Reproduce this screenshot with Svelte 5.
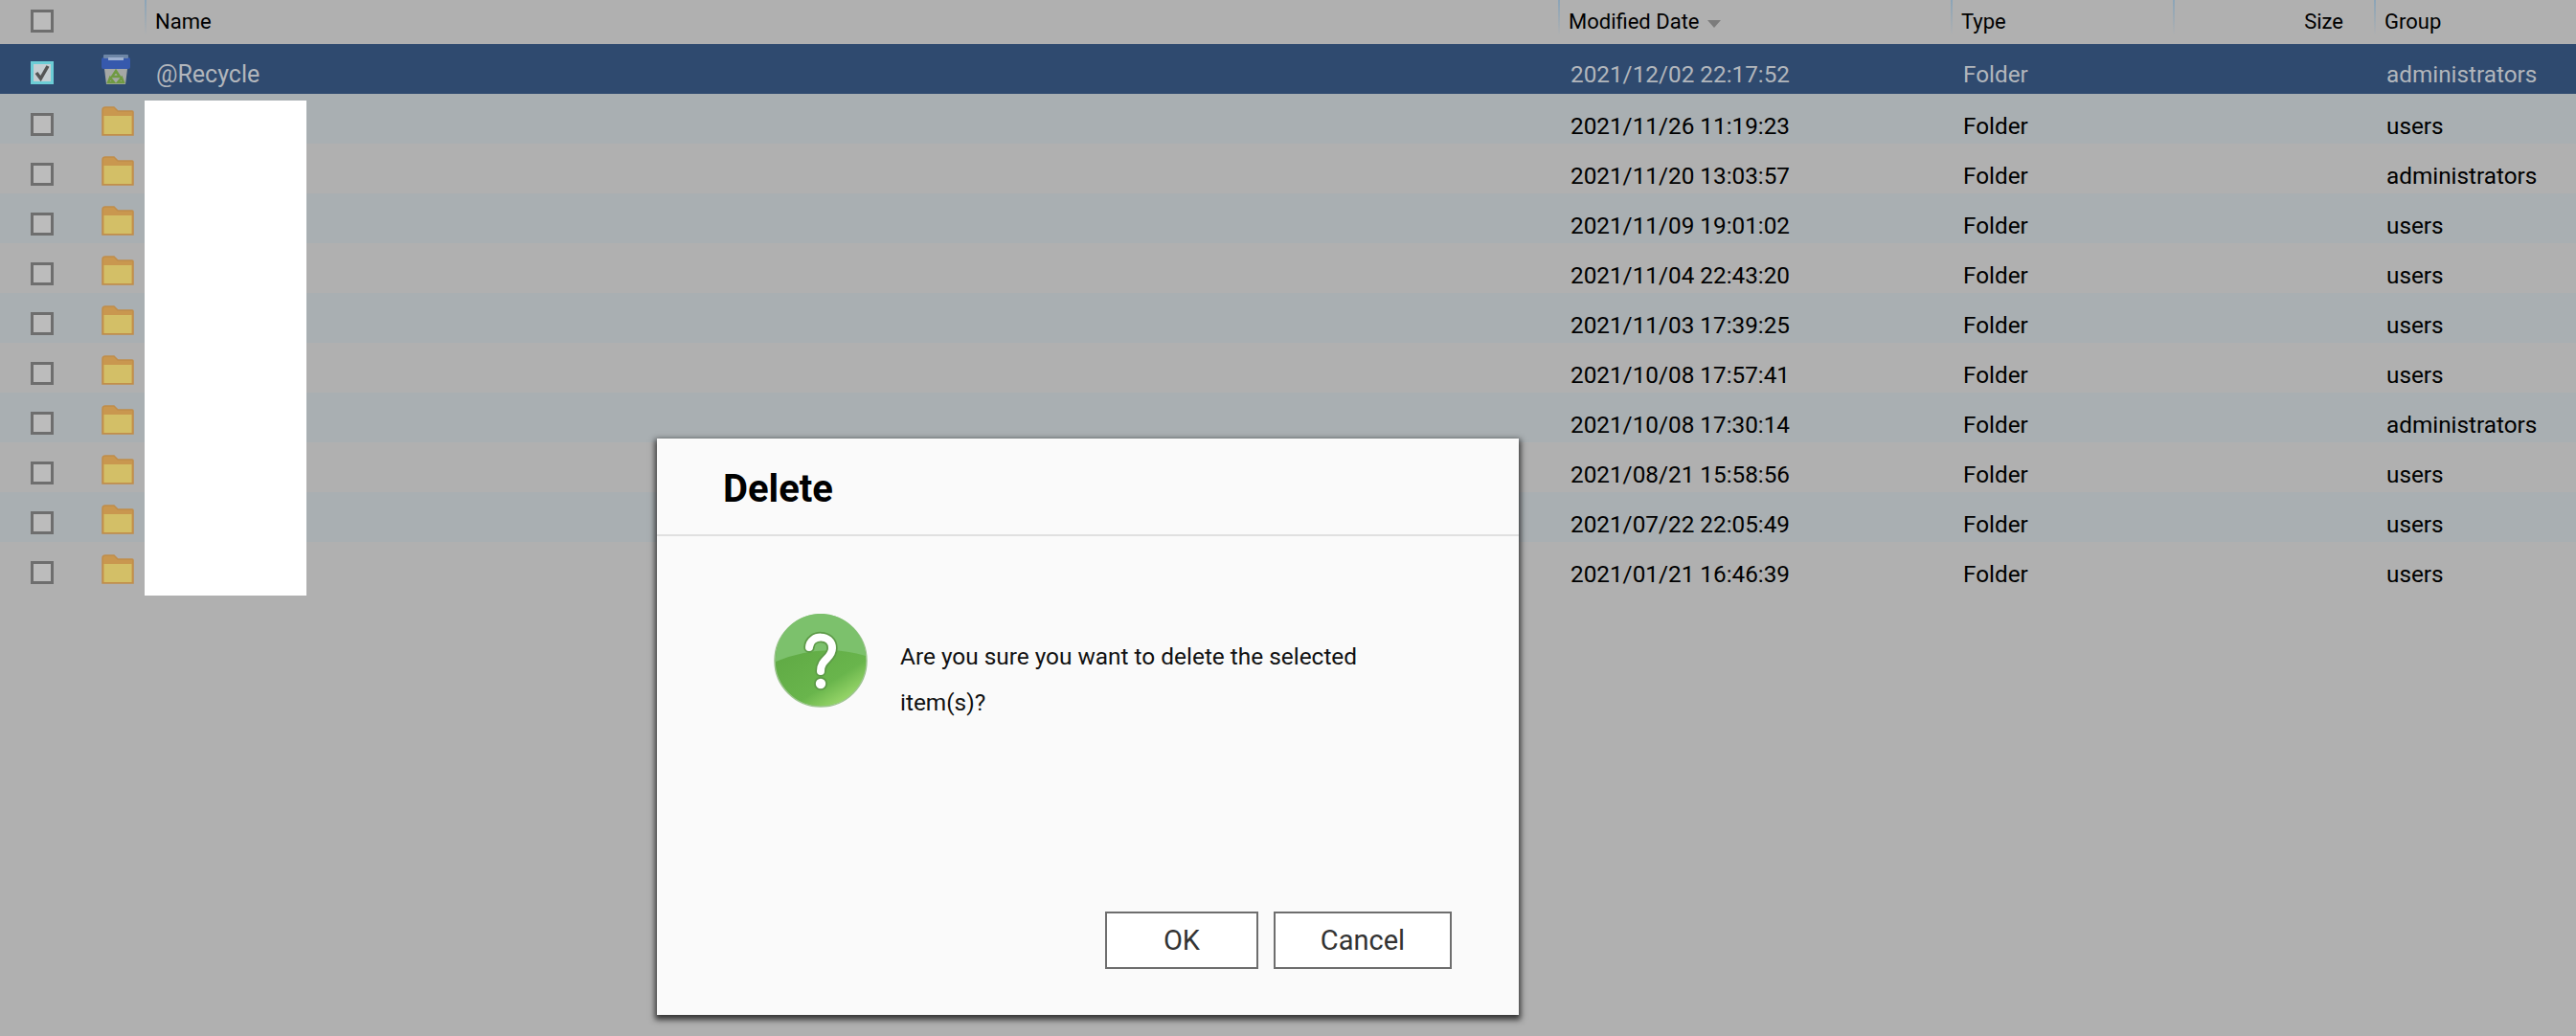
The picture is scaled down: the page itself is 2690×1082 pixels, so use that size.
<script>
    const rows = [
        { date: "2021/12/02 22:17:52", group: "administrators", name: "@Recycle", selected: true },
        { date: "2021/11/26 11:19:23", group: "users" },
        { date: "2021/11/20 13:03:57", group: "administrators" },
        { date: "2021/11/09 19:01:02", group: "users" },
        { date: "2021/11/04 22:43:20", group: "users" },
        { date: "2021/11/03 17:39:25", group: "users" },
        { date: "2021/10/08 17:57:41", group: "users" },
        { date: "2021/10/08 17:30:14", group: "administrators" },
        { date: "2021/08/21 15:58:56", group: "users" },
        { date: "2021/07/22 22:05:49", group: "users" },
        { date: "2021/01/21 16:46:39", group: "users" },
    ];
</script>

<div class="page">
    <div class="row head">
        <div class="check-cell"><span class="box"></span></div>
        <div></div>
        <div class="col">Name</div>
        <div class="col">Modified Date <span class="sort"></span></div>
        <div class="col">Type</div>
        <div class="col size">Size</div>
        <div class="col">Group</div>
    </div>

    {#each rows as row, i}
        <div class="row item" class:selected={row.selected} class:alt={i % 2 === 1}>
            <div class="check-cell">
                <span class="box" class:checked={row.selected}>
                    {#if row.selected}
                        <svg viewBox="0 0 18 18" width="18" height="18">
                            <path d="M3 9 L7.5 15 L15 2" fill="none" stroke="#555" stroke-width="3.5" />
                        </svg>
                    {/if}
                </span>
            </div>
            <div class="icon-cell">
                {#if row.selected}
                    <svg viewBox="0 0 30 32" width="30" height="32">
                        <path d="M3 15 H27 L25 31 H5 Z" fill="#a5a8a6" />
                        <rect x="0" y="3" width="30" height="12" rx="2" fill="#3659ad" />
                        <rect x="2" y="0" width="26" height="4" rx="1" fill="#6d86a6" />
                        <rect x="7" y="3" width="16" height="3" fill="#9db0cf" />
                        <path d="M15 17 L19 23 H11 Z M9 24 L13 29 H7 Z M21 24 L23 29 H17 Z" fill="none" stroke="#6f9a42" stroke-width="2.4" />
                    </svg>
                {:else}
                    <svg viewBox="0 0 34 31" width="34" height="31">
                        <path d="M1 30 V4 Q1 1 4 1 H13 L17 5 H32 Q33 5 33 6 V30 Z" fill="#c9974f" stroke="#c08d4a" stroke-width="1.5" />
                        <rect x="2.5" y="10" width="29" height="19" fill="#d3bf67" />
                    </svg>
                {/if}
            </div>
            <div class="name">{row.name ?? ""}</div>
            <div class="cell">{row.date}</div>
            <div class="cell">Folder</div>
            <div class="cell"></div>
            <div class="cell">{row.group}</div>
        </div>
    {/each}

    <div class="redacted"></div>

    <div class="dialog">
        <div class="dialog-title">Delete</div>
        <div class="dialog-body">
            <svg class="question" viewBox="0 0 98 98" width="98" height="98">
                <defs>
                    <linearGradient id="ball" x1="0.3" y1="0.2" x2="0.8" y2="1">
                        <stop offset="0" stop-color="#5fa944" />
                        <stop offset="0.65" stop-color="#69b54c" />
                        <stop offset="1" stop-color="#a6e072" />
                    </linearGradient>
                </defs>
                <circle cx="49" cy="49" r="48" fill="url(#ball)" stroke="#9cc48e" stroke-width="1.5" />
                <path d="M2 50 A47 47 0 0 1 96 44 Q50 30 2 50 Z" fill="#7cc16c" />
                <g fill="none" stroke="#5d9a48" stroke-width="11.5" stroke-linecap="round">
                    <path d="M37 35 C38 21 61 21 61 36 C61 47 49 47 49 60" />
                </g>
                <circle cx="49" cy="73" r="7" fill="#5d9a48" />
                <g fill="none" stroke="#fff" stroke-width="8" stroke-linecap="round">
                    <path d="M37 35 C38 21 61 21 61 36 C61 47 49 47 49 60" />
                </g>
                <circle cx="49" cy="73" r="5.2" fill="#fff" />
            </svg>
            <p>Are you sure you want to delete the selected item(s)?</p>
        </div>
        <div class="dialog-actions">
            <button class="ok">OK</button>
            <button class="cancel">Cancel</button>
        </div>
    </div>
</div>

<style>
    :global(body) {
        background: #b0b0b0;
    }
    .page {
        position: relative;
        height: 1082px;
        overflow: hidden;
        font-family: Roboto, "Liberation Sans", sans-serif;
        color: #000;
    }
    .row {
        display: grid;
        grid-template-columns: 98px 53px 1476px 410px 232px 210px 1fr;
        box-sizing: border-box;
    }
    .head {
        height: 46px;
        font-size: 22px;
    }
    .head .check-cell {
        padding-top: 10px;
    }
    .col {
        height: 36px;
        line-height: 46px;
        padding-left: 9px;
        border-left: 2px solid;
        border-image: linear-gradient(#8aa4b8, #b0b0b0) 1;
        box-sizing: border-box;
    }
    .size {
        text-align: right;
        padding-right: 32px;
    }
    .sort {
        display: inline-block;
        border: 7px solid transparent;
        border-top: 8px solid #7c7c7c;
        border-bottom: 0;
        margin-left: 3px;
        vertical-align: 1px;
    }
    .item {
        height: 52px;
        padding-top: 12px;
        align-items: center;
        font-size: 24.3px;
        background: #b0b0b0;
    }
    .item.alt {
        background: #a9afb2;
    }
    .item.selected {
        padding-top: 8px;
        background: #2f4a6f;
        color: #b2b6bc;
    }
    .check-cell {
        padding-left: 32px;
        line-height: 0;
    }
    .box {
        display: inline-flex;
        align-items: center;
        justify-content: center;
        width: 24px;
        height: 24px;
        box-sizing: border-box;
        border: 3px solid #6e6e6e;
        background: #bcbcbc;
    }
    .box.checked {
        border-color: #6ccdd6;
        background: #c6ced2;
    }
    .icon-cell {
        padding-left: 8px;
        line-height: 0;
        margin-top: -7px;
    }
    .name {
        padding: 2px 0 0 12px;
        font-size: 25px;
    }
    .cell {
        padding: 2px 0 0 13px;
    }
    .redacted {
        position: absolute;
        left: 151px;
        top: 105px;
        width: 169px;
        height: 517px;
        background: #fff;
    }
    .dialog {
        position: absolute;
        left: 686px;
        top: 458px;
        width: 900px;
        height: 602px;
        box-sizing: border-box;
        display: flex;
        flex-direction: column;
        background: #fafafa;
        box-shadow: 0 3px 6px 2px rgba(0, 0, 0, 0.7);
    }
    .dialog-title {
        height: 102px;
        box-sizing: border-box;
        padding: 30px 0 0 69px;
        border-bottom: 2px solid #e0e0e0;
        font-size: 40px;
        font-weight: 700;
        line-height: 46px;
    }
    .dialog-body {
        flex: 1;
        display: flex;
        align-items: flex-start;
        padding: 81px 0 0 122px;
    }
    .question {
        flex: none;
    }
    .dialog-body p {
        width: 500px;
        margin: 21px 0 0 34px;
        font-size: 24.4px;
        line-height: 48px;
        color: #111;
    }
    .dialog-actions {
        display: flex;
        justify-content: flex-end;
        gap: 16px;
        padding: 0 70px 48px 0;
    }
    button {
        height: 60px;
        box-sizing: border-box;
        border: 2px solid #6e6e6e;
        background: #fff;
        color: #333;
        font: 29px Roboto, "Liberation Sans", sans-serif;
        padding: 0;
    }
    .ok {
        width: 160px;
    }
    .cancel {
        width: 186px;
    }
</style>
